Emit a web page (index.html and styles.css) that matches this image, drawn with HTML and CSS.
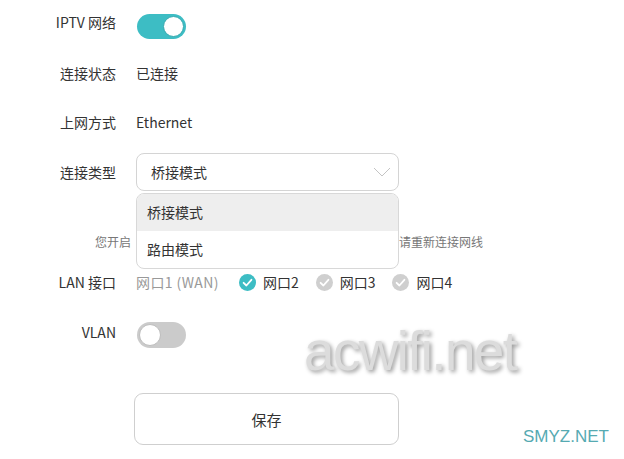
FILE: index.html
```html
<!DOCTYPE html>
<html lang="zh-CN">
<head>
    <meta charset="UTF-8">
    <meta name="viewport" content="width=device-width, initial-scale=1.0">
    <title>IPTV 设置</title>
    <link rel="stylesheet" href="styles.css">
</head>
<body>
    <div class="page">
        <div class="row row-iptv">
            <span class="label">IPTV 网络</span>
            <span class="toggle on"><span class="knob"></span></span>
        </div>

        <div class="row row-status">
            <span class="label">连接状态</span>
            <span class="value">已连接</span>
        </div>

        <div class="row row-mode">
            <span class="label">上网方式</span>
            <span class="value">Ethernet</span>
        </div>

        <div class="row row-type">
            <span class="label label-type">连接类型</span>
            <div class="select">
                <span>桥接模式</span>
                <svg class="chevron" width="18" height="10" viewBox="0 0 18 10">
                    <polyline points="1,1 9,9 17,1" fill="none" stroke="#c4c4c4" stroke-width="1"/>
                </svg>
            </div>
            <!-- open dropdown -->
            <ul class="menu">
                <li class="active">桥接模式</li>
                <li>路由模式</li>
            </ul>
        </div>

        <!-- middle of the hint is covered by the open dropdown -->
        <p class="hint"><span>您开启</span><span>请重新连接网线</span></p>

        <div class="row row-lan">
            <span class="label">LAN 接口</span>
            <div class="ports">
                <span class="port wan">网口1 (WAN)</span>
                <span class="port">
                    <svg class="check" width="17" height="17" viewBox="0 0 17 17">
                        <circle cx="8.5" cy="8.5" r="8.5" fill="#3dbdc4"/>
                        <polyline points="4.6,8.8 7.4,11.5 12.4,5.8" fill="none" stroke="#fff" stroke-width="1.8" stroke-linecap="round" stroke-linejoin="round"/>
                    </svg>网口2
                </span>
                <span class="port">
                    <svg class="check" width="17" height="17" viewBox="0 0 17 17">
                        <circle cx="8.5" cy="8.5" r="8.5" fill="#cfcfcf"/>
                        <polyline points="4.6,8.8 7.4,11.5 12.4,5.8" fill="none" stroke="#fff" stroke-width="1.8" stroke-linecap="round" stroke-linejoin="round"/>
                    </svg>网口3
                </span>
                <span class="port">
                    <svg class="check" width="17" height="17" viewBox="0 0 17 17">
                        <circle cx="8.5" cy="8.5" r="8.5" fill="#cfcfcf"/>
                        <polyline points="4.6,8.8 7.4,11.5 12.4,5.8" fill="none" stroke="#fff" stroke-width="1.8" stroke-linecap="round" stroke-linejoin="round"/>
                    </svg>网口4
                </span>
            </div>
        </div>

        <div class="row row-vlan">
            <span class="label">VLAN</span>
            <span class="toggle off"><span class="knob"></span></span>
        </div>

        <button class="save">保存</button>
    </div>

    <div class="watermark">acwifi.net</div>
    <div class="site-mark">SMYZ.NET</div>
</body>
</html>
```

FILE: styles.css
```css
body {
    margin: 0;
    background: #fff;
    color: #333;
    font-family: "Noto Sans CJK SC", "Noto Sans", sans-serif;
    font-size: 14px;
}

.page {
    position: relative;
    padding-top: 12px;
}

.row {
    display: grid;
    grid-template-columns: 116px 263px;
    column-gap: 20px;
    align-items: start;
    position: relative;
}

.label {
    text-align: right;
    line-height: 20px;
    white-space: nowrap;
}

.value {
    line-height: 20px;
}

.row-iptv { height: 51px; }
.row-status { height: 49px; }
.row-mode { height: 41px; }
.row-type { height: 81px; }
.row-lan { height: 50px; }
.row-vlan { height: 71px; }

.label-type {
    margin-top: 9px;
}

/* switches */
.toggle {
    position: relative;
    display: block;
    width: 49px;
    height: 25px;
    border-radius: 13px;
    margin-left: 1px;
    margin-top: 2px;
}

.toggle.on {
    background: #3dbdc4;
}

.toggle.off {
    background: #cbcbcb;
    margin-top: 0;
    height: 26px;
}

.toggle .knob {
    position: absolute;
    top: 2px;
    width: 21px;
    height: 21px;
    border-radius: 50%;
    background: #fff;
    box-sizing: border-box;
}

.toggle.on .knob {
    right: 2px;
    border: 1px solid #38a9af;
}

.toggle.off .knob {
    left: 2px;
    top: 2px;
    width: 22px;
    height: 22px;
    border: 1px solid #bdbdbd;
}

/* select */
.select {
    display: flex;
    align-items: center;
    justify-content: space-between;
    height: 38px;
    box-sizing: border-box;
    border: 1px solid #d4d4d4;
    border-radius: 8px;
    padding: 0 7px 0 14px;
    background: #fff;
}

.menu {
    position: absolute;
    top: 40px;
    left: 136px;
    width: 263px;
    margin: 0;
    padding: 0;
    list-style: none;
    box-sizing: border-box;
    border: 1px solid #d8d8d8;
    border-radius: 8px;
    background: #fff;
    overflow: hidden;
    z-index: 2;
}

.menu li {
    height: 37px;
    line-height: 37px;
    padding-left: 10px;
}

.menu li.active {
    background: #eeeeee;
}

.hint {
    display: flex;
    justify-content: space-between;
    margin: 0 0 0 95px;
    width: 388px;
    height: 38px;
    font-size: 12px;
    line-height: 16px;
    color: #777;
    white-space: nowrap;
}

/* ports */
.ports {
    display: flex;
    align-items: center;
    gap: 17px;
    line-height: 20px;
    white-space: nowrap;
}

.port {
    display: flex;
    align-items: center;
    gap: 7px;
}

.port.wan {
    color: #999;
    letter-spacing: 0.4px;
    margin-right: 3px;
}

.check {
    display: block;
}

.save {
    display: block;
    margin-left: 134px;
    width: 265px;
    height: 52px;
    border: 1px solid #cfcfcf;
    border-radius: 9px;
    background: #fff;
    color: #333;
    font-family: inherit;
    font-size: 15px;
}

.watermark {
    position: absolute;
    left: 304px;
    top: 319px;
    font-family: "Liberation Sans", sans-serif;
    font-size: 55px;
    letter-spacing: -1.7px;
    color: #dcdcdc;
    text-shadow: 2px 2px 4px #9a9a9a;
}

.site-mark {
    position: absolute;
    left: 523px;
    top: 427px;
    font-family: "Liberation Sans", sans-serif;
    font-size: 17px;
    color: #56aab2;
}
```
